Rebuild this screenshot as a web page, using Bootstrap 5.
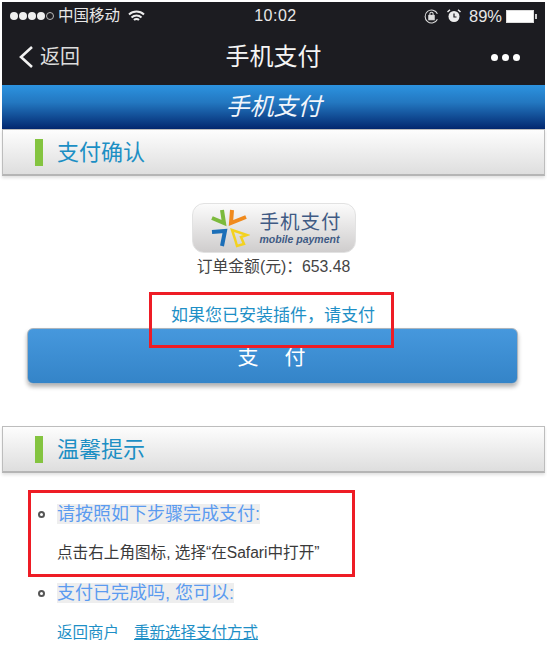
<!DOCTYPE html>
<html lang="zh-CN">
  <head>
    <meta charset="UTF-8" />
    <title>手机支付</title>
    <link href="https://cdn.jsdelivr.net/npm/bootstrap@5.3.0/dist/css/bootstrap.min.css" rel="stylesheet" />
    <style>
      body {
        font-family: "Liberation Sans", "Noto Sans CJK SC", sans-serif;
        background: #fff;
        color: #444;
      }
      .page-wrap { position: relative; width: 547px; height: 669px; padding: 2px 2px 0; overflow: hidden; }
      .phone-bar { background: #1c1c21; color: #e8e8e8; height: 83px; }
      .status-row { height: 28px; padding: 0 8px 0 8px; font-size: 15.5px; }
      .status-side { width: 200px; }
      .signal-dot { width: 8px; height: 8px; border-radius: 50%; background: #eee; display: inline-block; margin-right: 1px; }
      .signal-dot.empty { background: none; border: 1px solid #bbb; }
      .op-text { margin-left: 3px; }
      .time-text { font-size: 16px; font-weight: 500; letter-spacing: .5px; margin-left: 4px; }
      .pct-text { font-size: 16.5px; }
      .batt-box { width: 28px; height: 13px; background: #fff; border: 1px solid #ddd; display: inline-block; margin-left: 4px; }
      .batt-nub { width: 2px; height: 5px; background: #ccc; display: inline-block; margin-left: 1px; }
      .title-row { height: 55px; padding: 0 16px 1px 16px; }
      .title-side { width: 100px; }
      .more-side { padding-right: 9px; }
      .back-text { font-size: 20px; color: #ddd; margin-left: 6px; }
      .title-text { font-size: 24px; color: #f5f5f5; }
      .more-dot { width: 7px; height: 7px; border-radius: 50%; background: #fff; }
      .blue-bar {
        height: 44px; line-height: 44px; font-size: 24px; font-style: italic; color: #f2f6fb; text-align: center;
        background: linear-gradient(#2c93e0 0%, #2377c0 40%, #02276f 100%);
      }
      .sect-head {
        height: 47px; border: 1px solid #bdbdbd; border-bottom: 2px solid #b5b5b5; padding-left: 32px;
        background: linear-gradient(#fdfdfd, #dedede); color: #1c8fc4; font-size: 22px;
        box-shadow: 0 2px 3px rgba(0,0,0,.12);
      }
      .sect-mark { width: 8px; height: 27px; background: #84c440; margin-right: 14px; }
      .logo-pill {
        width: 164px; height: 50px; margin: 27px auto 0; border-radius: 12px; border: 1px solid #e2e2e2;
        background: linear-gradient(#fbfbfb, #cfcdcd); padding-left: 17px; color: #3f5a84;
      }
      .logo-text { margin-left: 10px; }
      .logo-cn { font-size: 19.5px; line-height: 22px; letter-spacing: 1px; }
      .logo-en { font-size: 10.5px; line-height: 12px; font-style: italic; font-weight: 700; white-space: nowrap; }
      .amount-text { font-size: 15.8px; line-height: 20px; margin-top: 4px; }
      .plugin-link { font-size: 17px; line-height: 24px; color: #1e8fc6; margin-top: 27px; margin-left: -1px; }
      .pay-btn {
        display: block; width: 491px; height: 56px; margin: 0 0 42px 25px; font-size: 21px; color: #fff; line-height: 56px; padding: 0;
        background: linear-gradient(#4698dd, #3484c8); border: 1px solid #aab4bd; border-radius: 6px;
        box-shadow: 0 3px 4px rgba(0,0,0,.3); letter-spacing: 26px; text-indent: 24px;
      }
      .tip-list { padding-left: 55px; }
      .tip-head { width: fit-content; font-size: 18px; line-height: 20px; color: #5b9bf0; background: #eee; position: relative; margin-top: 20px; }
      .tip-head.first-head { margin-top: 31px; }
      .tip-bullet { position: absolute; left: -19px; top: 7px; width: 7px; height: 7px; border: 2px solid #555; border-radius: 50%; }
      .tip-text { font-size: 15.6px; line-height: 20px; color: #3a3a3a; margin-top: 19px; }
      .tip-links { font-size: 15.5px; line-height: 20px; margin-top: 20px; }
      .tip-links a { color: #1e8fc6; text-decoration: none; }
      .tip-links a.under { text-decoration: underline; margin-left: 15px; }
      .red-note { position: absolute; border: 3px solid #ee1c25; }
      .note-one { left: 149px; top: 292px; width: 245px; height: 56px; }
      .note-two { left: 28px; top: 490px; width: 327px; height: 87px; }
    </style>
  </head>
  <body>
    <div class="page-wrap">
      <div class="phone-bar">
        <div class="status-row d-flex align-items-center justify-content-between">
          <div class="status-side d-flex align-items-center">
            <span class="signal-dot"></span><span class="signal-dot"></span><span class="signal-dot"></span><span class="signal-dot"></span><span class="signal-dot empty"></span>
            <span class="op-text">中国移动</span>
            <svg class="ms-2" width="17" height="13" viewBox="0 0 17 13" fill="none" stroke="#eee" stroke-width="2"><path d="M1 4.5a11 11 0 0 1 15 0M3.5 7.5a7.5 7.5 0 0 1 10 0M6 10a3.5 3.5 0 0 1 5 0"/></svg>
          </div>
          <div class="time-text">10:02</div>
          <div class="status-side d-flex align-items-center justify-content-end">
            <svg width="15" height="15" viewBox="0 0 14 14" fill="none" stroke="#ddd" stroke-width="1"><path d="M12.5 9.5A6 6 0 1 1 12.5 4.5"/><rect x="4.5" y="6" width="5" height="4" fill="#ddd"/><path d="M5.5 6V4.5a1.5 1.5 0 0 1 3 0V6"/></svg>
            <svg class="ms-2" width="14" height="14" viewBox="0 0 14 14"><circle cx="7" cy="7.5" r="5.5" fill="#eee"/><path d="M7 4.5V8h2.5" fill="none" stroke="#1c1c21" stroke-width="1.2"/><path d="M0.5 3 3 0.8M13.5 3 11 .8" stroke="#eee" stroke-width="1.5"/></svg>
            <span class="ms-2 pct-text">89%</span>
            <span class="batt-box"></span><span class="batt-nub"></span>
          </div>
        </div>
        <div class="title-row d-flex align-items-center justify-content-between">
          <div class="title-side d-flex align-items-center">
            <svg width="16" height="24" viewBox="0 0 16 24" fill="none" stroke="#f2f2f2" stroke-width="2.6"><path d="M14 2 3 12l11 10"/></svg>
            <span class="back-text">返回</span>
          </div>
          <div class="title-text">手机支付</div>
          <div class="title-side more-side d-flex justify-content-end gap-1">
            <span class="more-dot"></span><span class="more-dot"></span><span class="more-dot"></span>
          </div>
        </div>
      </div>
      <div class="blue-bar">手机支付</div>
      <div class="sect-head d-flex align-items-center"><span class="sect-mark"></span>支付确认</div>

      <div class="logo-pill d-flex align-items-center">
        <svg width="40" height="40" viewBox="0 0 40 40" fill="none" stroke-width="4">
          <path d="M2 10 14 15 12 2" stroke="#7cba3c"/>
          <path d="M22 2 21 15 36 9" stroke="#f08a1d"/>
          <path d="M2 24 15 23 12 38" stroke="#1c6fb8"/>
          <path d="M22 22 37 27 31 29 34 36 27 38 25 31Z" stroke="#f3d21f" stroke-width="2.5"/>
        </svg>
        <div class="logo-text">
          <div class="logo-cn">手机支付</div>
          <div class="logo-en">mobile payment</div>
        </div>
      </div>
      <div class="amount-text text-center">订单金额(元)：653.48</div>
      <div class="plugin-link text-center">如果您已安装插件，请支付</div>
      <button type="button" class="btn pay-btn">支付</button>

      <div class="sect-head d-flex align-items-center"><span class="sect-mark"></span>温馨提示</div>

      <div class="tip-list">
        <div class="tip-head first-head"><span class="tip-bullet"></span>请按照如下步骤完成支付:</div>
        <div class="tip-text">点击右上角图标, 选择“在Safari中打开”</div>
        <div class="tip-head"><span class="tip-bullet"></span>支付已完成吗, 您可以:</div>
        <div class="tip-links"><a href="#">返回商户</a><a href="#" class="under">重新选择支付方式</a></div>
      </div>

      <div class="red-note note-one"></div>
      <div class="red-note note-two"></div>
    </div>
    <script src="https://cdn.jsdelivr.net/npm/bootstrap@5.3.0/dist/js/bootstrap.bundle.min.js"></script>
  </body>
</html>
